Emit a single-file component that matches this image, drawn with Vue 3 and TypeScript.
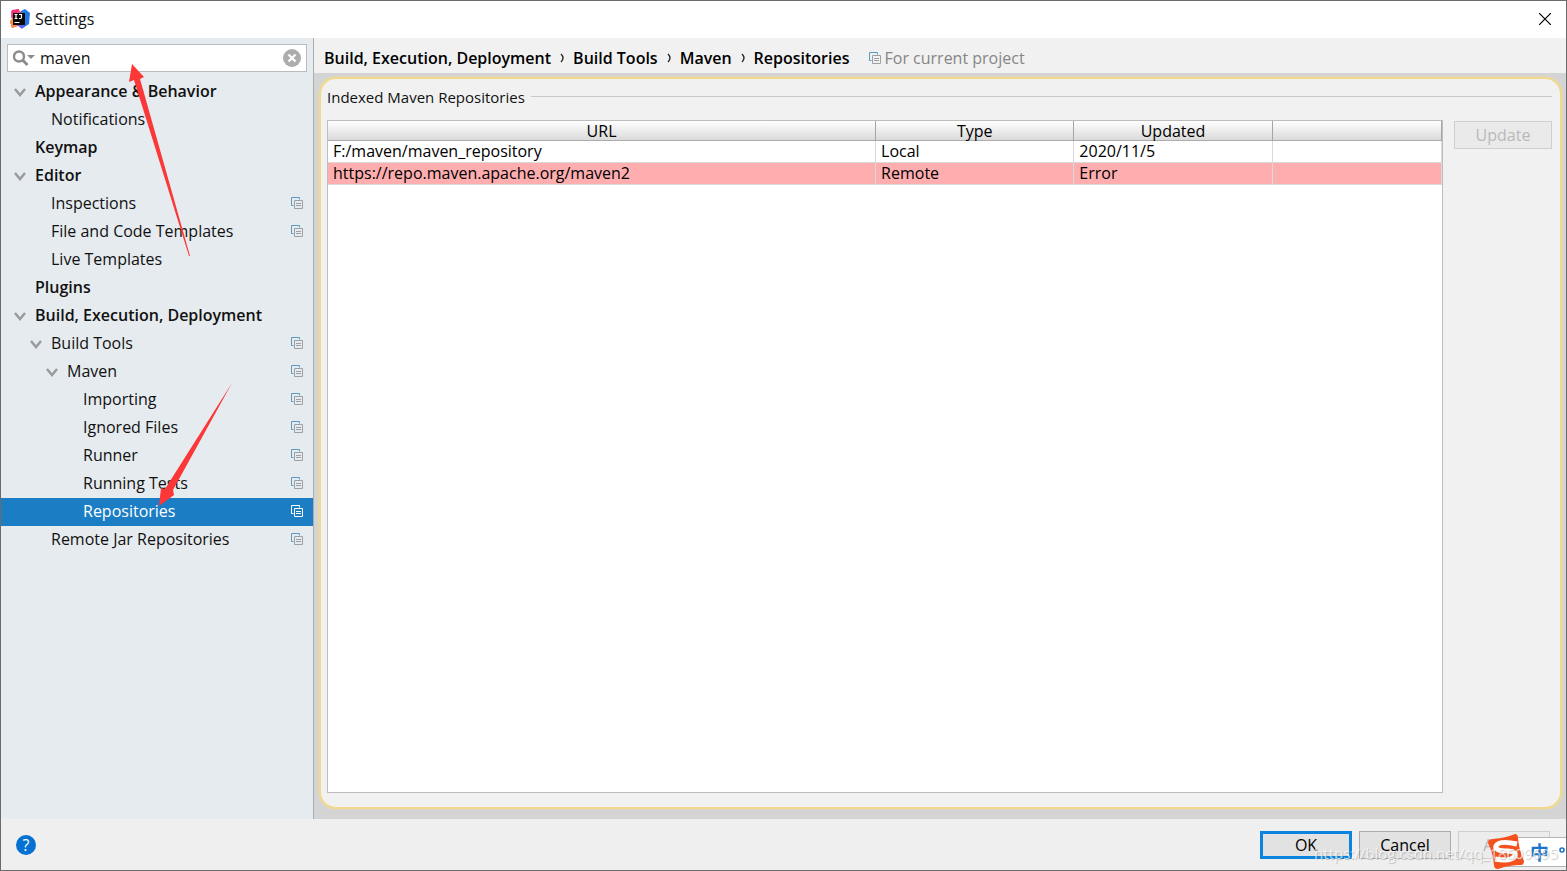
<script setup lang="ts">
import { ref } from 'vue'

interface TreeItem {
  label: string
  depth: number
  bold?: boolean
  open?: boolean
  project?: boolean
  selected?: boolean
}

const query = ref('maven')

const items: TreeItem[] = [
  { label: 'Appearance & Behavior', depth: 0, bold: true, open: true },
  { label: 'Notifications', depth: 1 },
  { label: 'Keymap', depth: 0, bold: true },
  { label: 'Editor', depth: 0, bold: true, open: true },
  { label: 'Inspections', depth: 1, project: true },
  { label: 'File and Code Templates', depth: 1, project: true },
  { label: 'Live Templates', depth: 1 },
  { label: 'Plugins', depth: 0, bold: true },
  { label: 'Build, Execution, Deployment', depth: 0, bold: true, open: true },
  { label: 'Build Tools', depth: 1, open: true, project: true },
  { label: 'Maven', depth: 2, open: true, project: true },
  { label: 'Importing', depth: 3, project: true },
  { label: 'Ignored Files', depth: 3, project: true },
  { label: 'Runner', depth: 3, project: true },
  { label: 'Running Tests', depth: 3, project: true },
  { label: 'Repositories', depth: 3, project: true, selected: true },
  { label: 'Remote Jar Repositories', depth: 1, project: true },
]

const crumbs = ['Build, Execution, Deployment', 'Build Tools', 'Maven', 'Repositories']

const repos = [
  { url: 'F:/maven/maven_repository', type: 'Local', updated: '2020/11/5', error: false },
  { url: 'https://repo.maven.apache.org/maven2', type: 'Remote', updated: 'Error', error: true },
]
</script>

<template>
  <div class="window">
    <header class="titlebar">
      <svg class="logo" viewBox="0 0 20 20" aria-hidden="true">
        <path d="M1 2 8 0l5 5-5 12-6 2-2-6 2-3z" fill="#fb4a6b" />
        <path d="M0 12 4 8l3 9-5 2z" fill="#fd8b3d" />
        <path d="M2 1 9 0l-2 5-6 4z" fill="#f5317f" />
        <path d="M11 2 15 0l5 4-1 11-6 4-5-3z" fill="#1f7ae8" />
        <path d="M7 16h8l-3 4z" fill="#5a62f0" />
        <rect x="3" y="4" width="12" height="12" fill="#080808" />
        <path d="M4.500 5.500h3M6 5.500v4M4.500 9.500h3M9 5.500h2.500v3q0 1-1 1H9M4.500 13.500h5" fill="none" stroke="#fff" stroke-width="1.200" />
      </svg>
      <span class="title">Settings</span>
      <button class="close" type="button" aria-label="Close">
        <svg viewBox="0 0 12 12"><path d="M0 0 12 12M12 0 0 12" fill="none" stroke="#000" stroke-width="1.200" /></svg>
      </button>
    </header>

    <div class="body">
      <aside class="sidebar">
        <div class="search">
          <svg class="lens" viewBox="0 0 23 16" aria-hidden="true">
            <circle cx="7" cy="6.500" r="5" fill="none" stroke="#8c8c8c" stroke-width="2.400" />
            <path d="m10.500 10 5 5" stroke="#8c8c8c" stroke-width="2.800" />
            <path d="M15 5h8l-4 4z" fill="#8c8c8c" />
          </svg>
          <input v-model="query" type="text" aria-label="Search settings" />
          <button class="clear" type="button" aria-label="Clear search">
            <svg viewBox="0 0 18 18">
              <circle cx="9" cy="9" r="9" fill="#adadad" />
              <path d="m5.500 5.500 7 7m0-7-7 7" stroke="#fff" stroke-width="2.200" />
            </svg>
          </button>
        </div>
        <ul class="tree">
          <li v-for="item in items" :key="item.label" :class="['row', 'd' + item.depth, { bold: item.bold, selected: item.selected }]">
            <span class="twisty">
              <svg v-if="item.open" viewBox="0 0 12 10"><path d="m1 2 5 6 5-6" fill="none" stroke="#989b9e" stroke-width="2.500" /></svg>
            </span>
            <span class="label">{{ item.label }}</span>
            <svg v-if="item.project" class="copy" viewBox="0 0 12 12">
              <path class="back" d="M2.500 8.500h-2v-8h8v2" />
              <path class="front" d="M3.500 3.500h8v8h-8zM5 6.500h5M5 8.500h5" />
            </svg>
          </li>
        </ul>
      </aside>

      <main class="main">
        <nav class="crumbs" aria-label="Breadcrumb">
          <template v-for="(crumb, i) in crumbs" :key="crumb">
            <svg v-if="i" class="sep" viewBox="0 0 4 10"><path d="M1 1q4 4 0 8" fill="none" stroke="#222" stroke-width="1.300" /></svg>
            <span class="crumb">{{ crumb }}</span>
          </template>
          <span class="scope">
            <svg class="copy" viewBox="0 0 12 12">
              <path class="back" d="M2.500 8.500h-2v-8h8v2" />
              <path class="front" d="M3.500 3.500h8v8h-8zM5 6.500h5M5 8.500h5" />
            </svg>
            For current project
          </span>
        </nav>
        <div class="stage">
          <section class="panel">
            <h2 class="legend">Indexed Maven Repositories</h2>
            <div class="content">
              <div class="tablebox">
                <table>
                  <colgroup><col class="c1" /><col class="c2" /><col class="c2" /><col /></colgroup>
                  <thead>
                    <tr><th>URL</th><th>Type</th><th>Updated</th><th></th></tr>
                  </thead>
                  <tbody>
                    <tr v-for="repo in repos" :key="repo.url" :class="{ error: repo.error }">
                      <td>{{ repo.url }}</td><td>{{ repo.type }}</td><td>{{ repo.updated }}</td><td></td>
                    </tr>
                  </tbody>
                </table>
              </div>
              <button class="btn update" type="button" disabled>Update</button>
            </div>
          </section>
        </div>
      </main>
    </div>

    <footer class="footer">
      <button class="help" type="button" aria-label="Help">?</button>
      <div class="actions">
        <button class="btn ok" type="button">OK</button>
        <button class="btn" type="button">Cancel</button>
        <button class="btn apply" type="button" disabled>Apply</button>
      </div>
    </footer>

    <svg class="arrows" viewBox="0 0 320 560" aria-hidden="true">
      <path d="M132 64 144 77 140 79 190 256 189 256 134 80 129 82z" fill="#fc3737" />
      <path d="M232 383 173 490 174 495 159 506 161 488 165 489z" fill="#fc3737" />
    </svg>

    <div class="ime">
      <svg class="sogou" viewBox="0 0 36 36" aria-hidden="true">
        <path d="M5 5Q18 4 27 0q3 0 3 4 1 12 6 23 0 4-3 4-12 0-23 4-4 0-4-4Q5 19 0 9q0-4 5-4z" fill="#f4511e" />
        <path d="M29 10Q11 6 8 12q-2 5 12 5 9 1 7 5-4 6-20 3" fill="none" stroke="#fff" stroke-width="5" />
      </svg>
      <span class="zh">中</span>
      <svg class="dot" viewBox="0 0 6 6"><circle cx="3" cy="3" r="2" fill="none" stroke="#1c74c9" stroke-width="1.600" /></svg>
    </div>
    <span class="watermark">https://blog.csdn.net/qq_18609695</span>
  </div>
</template>

<style>
html,
body,
#app {
  height: 100%;
}
</style>

<style scoped>
* {
  box-sizing: border-box;
}
.window {
  position: relative;
  display: flex;
  flex-direction: column;
  min-height: 100%;
  overflow: hidden;
  border: 1px solid #6b6a6c;
  background: #efefef;
  color: #111;
  font: 16px/20px 'Open Sans', 'Noto Sans', sans-serif;
}
button,
input {
  font: inherit;
  color: inherit;
}
svg {
  display: block;
}
.titlebar {
  display: flex;
  align-items: center;
  height: 37px;
  padding: 0 15px 2px 9px;
  background: #fff;
}
.logo {
  width: 20px;
  height: 20px;
  margin-right: 5px;
}
.title {
  flex: 1;
}
.close {
  padding: 0;
  border: 0;
  background: none;
}
.close svg {
  width: 12px;
  height: 12px;
}
.body {
  display: flex;
  flex: 1;
}
.sidebar {
  width: 313px;
  flex: none;
  padding-top: 6px;
  border-right: 1px solid #a9adb0;
  background: #e6ebef;
}
.search {
  display: flex;
  align-items: center;
  height: 28px;
  margin: 0 6px;
  padding: 0 5px 0 4px;
  border: 1px solid #b9bcbe;
  background: #fff;
}
.lens {
  width: 23px;
  height: 16px;
}
.search input {
  flex: 1;
  min-width: 0;
  padding: 0 0 0 5px;
  border: 0;
  outline: 0;
  background: none;
}
.clear {
  padding: 0;
  border: 0;
  background: none;
}
.clear svg {
  width: 18px;
  height: 18px;
}
.tree {
  margin: 6px 0 0;
  padding: 0;
  list-style: none;
}
.row {
  display: flex;
  align-items: center;
  height: 28px;
  padding-right: 10px;
}
.d0 {
  padding-left: 13px;
}
.d1 {
  padding-left: 29px;
}
.d2 {
  padding-left: 45px;
}
.d3 {
  padding-left: 61px;
}
.twisty {
  width: 21px;
}
.twisty svg {
  width: 12px;
  height: 10px;
}
.label {
  flex: 1;
  padding-bottom: 2px;
}
.bold,
.crumb {
  font-weight: 600;
}
.selected {
  background: #1b7dc4;
  color: #fff;
}
.copy {
  width: 12px;
  height: 12px;
  margin-bottom: 2px;
  fill: none;
}
.copy .back {
  stroke: #5b9bc0;
}
.copy .front {
  stroke: #9da0a2;
}
.selected .copy path {
  stroke: #fff;
}
.main {
  display: flex;
  flex: 1;
  flex-direction: column;
  min-width: 0;
}
.crumbs {
  display: flex;
  align-items: center;
  height: 35px;
  padding: 4px 10px 0;
  background: #f1f1f1;
  color: #000;
}
.sep {
  width: 4px;
  height: 10px;
  margin: 0 9px;
}
.scope {
  display: flex;
  align-items: center;
  gap: 4px;
  margin-left: 19px;
  color: #868686;
}
.scope .copy {
  margin-bottom: 0;
}
.stage {
  display: flex;
  flex: 1;
  padding: 4px 4px 10px 5px;
  background: #d4d4d4;
}
.panel {
  display: flex;
  flex: 1;
  flex-direction: column;
  padding: 8px 8px 14px 6px;
  border: 2px solid #f0d98a;
  border-radius: 17px;
  background: #f1f1f1;
  box-shadow: 0 0 0 1px #dfd8c0;
}
.legend {
  display: flex;
  align-items: center;
  gap: 6px;
  margin: 0 0 13px;
  font: 15px/20px 'Open Sans', 'Noto Sans', sans-serif;
}
.legend::after {
  flex: 1;
  height: 1px;
  margin-bottom: 2px;
  background: #c9c9c9;
  content: '';
}
.content {
  display: flex;
  flex: 1;
  align-items: flex-start;
  gap: 11px;
}
.tablebox {
  flex: 1;
  align-self: stretch;
  border: 1px solid #bdbdbd;
  background: #fff;
}
table {
  width: 100%;
  border-collapse: separate;
  border-spacing: 0;
  table-layout: fixed;
  color: #000;
}
.c1 {
  width: 49.2%;
}
.c2 {
  width: 17.8%;
}
th {
  height: 20px;
  padding: 1px 0 0;
  border-right: 1px solid #a5a5a5;
  border-bottom: 1px solid #acacac;
  background: linear-gradient(#fff, #dadada);
  font-weight: 400;
  line-height: 18px;
}
td {
  height: 22px;
  padding: 0 5px;
  border-right: 1px solid #dadada;
  border-bottom: 1px solid #dadada;
  line-height: 21px;
}
.error td {
  background: #ffaeb0;
}
.btn {
  width: 92px;
  height: 28px;
  padding: 0;
  border: 1px solid #acacac;
  background: #e2e2e2;
  color: #000;
}
.update {
  width: 98px;
  margin-top: 1px;
  border-color: #cfcfcf;
  background: #eaeaea;
  color: #b9b9b9;
}
.footer {
  display: flex;
  align-items: center;
  justify-content: space-between;
  height: 51px;
  padding: 0 16px 0 15px;
}
.help {
  width: 20px;
  height: 20px;
  padding: 0;
  border: 0;
  border-radius: 50%;
  background: #0470d1;
  color: #fff;
}
.actions {
  display: flex;
  gap: 7px;
}
.ok {
  border: 3px solid #0a84de;
}
.apply {
  border-color: #cfcfcf;
  background: #ececec;
  color: #b5b5b5;
}
.arrows {
  position: absolute;
  top: -1px;
  left: -1px;
  width: 320px;
  height: 560px;
  pointer-events: none;
}
.ime {
  position: absolute;
  right: -1px;
  bottom: 3px;
  display: flex;
  align-items: center;
  width: 61px;
  height: 30px;
  padding-right: 2px;
  border: 1px solid #b5b5b5;
  border-right: 0;
  background: #fff;
  color: #1c74c9;
}
.sogou {
  flex: none;
  width: 36px;
  height: 36px;
  margin-left: -19px;
}
.zh {
  margin-left: 6px;
  font: 700 19px/20px 'Noto Sans CJK SC', sans-serif;
}
.dot {
  flex: none;
  width: 6px;
  height: 6px;
  margin: 0 0 4px auto;
}
.watermark {
  position: absolute;
  right: 8px;
  bottom: 7px;
  color: rgba(255, 255, 255, 0.7);
  font-size: 15px;
  text-shadow: 1px 1px 1px rgba(120, 120, 120, 0.4);
  pointer-events: none;
}
</style>
